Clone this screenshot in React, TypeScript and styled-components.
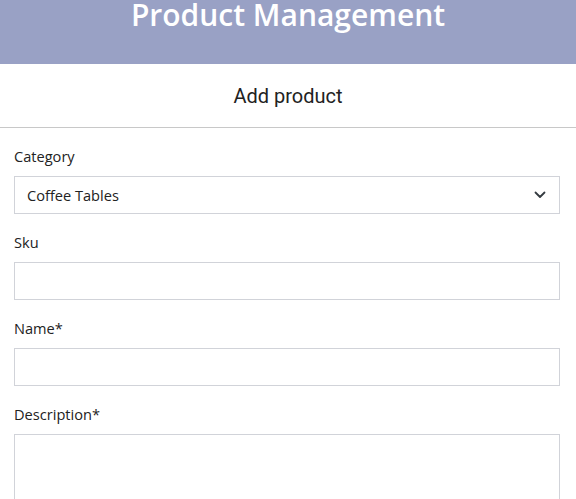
import React from 'react';
import styled, { createGlobalStyle } from 'styled-components';

const GlobalStyle = createGlobalStyle`
  html, body {
    margin: 0;
    padding: 0;
    background: #ffffff;
  }
  body {
    font-family: 'Open Sans', 'Noto Sans', sans-serif;
    overflow: hidden;
  }
`;

const Header = styled.header`
  height: 64px;
  background: #99a1c5;
  display: flex;
  justify-content: center;
  align-items: flex-start;
  overflow: hidden;
`;

const Title = styled.h1`
  margin: -5px 0 0;
  font-family: 'Open Sans', sans-serif;
  font-weight: 600;
  font-size: 30px;
  line-height: 40px;
  color: #ffffff;
`;

const SubBar = styled.div`
  height: 63px;
  display: flex;
  align-items: center;
  justify-content: center;
  border-bottom: 1px solid #c8c8c8;
`;

const SubTitle = styled.h2`
  margin: 0;
  font-family: Roboto, sans-serif;
  font-weight: 400;
  font-size: 20px;
  color: #222;
`;

const Form = styled.form`
  padding: 18px 16px 0 14px;
  display: flex;
  flex-direction: column;
`;

const Field = styled.div`
  display: flex;
  flex-direction: column;
  margin-bottom: 18px;
`;

const Label = styled.label`
  font-size: 14.6px;
  line-height: 20px;
  color: #222;
  margin-bottom: 10px;
`;

const boxBase = `
  box-sizing: border-box;
  width: 100%;
  border: 1px solid #d1d3d9;
  border-radius: 0;
  background: #fff;
  font-family: 'Open Sans', sans-serif;
  font-size: 14.6px;
  color: #222;
  outline: none;
`;

const SelectWrap = styled.div`
  position: relative;
`;

const Select = styled.select`
  ${boxBase}
  height: 38px;
  padding: 0 12px;
  appearance: none;
  -webkit-appearance: none;
`;

const Chevron = styled.svg`
  position: absolute;
  right: 14px;
  top: 15px;
  pointer-events: none;
`;

const Input = styled.input`
  ${boxBase}
  height: 38px;
  padding: 0 12px;
`;

const TextArea = styled.textarea`
  ${boxBase}
  height: 100px;
  padding: 8px 12px;
  resize: none;
`;

const App = () => {
  return (
    <>
      <GlobalStyle />
      <Header>
        <Title>Product Management</Title>
      </Header>
      <SubBar>
        <SubTitle>Add product</SubTitle>
      </SubBar>
      <Form onSubmit={(e) => e.preventDefault()}>
        <Field>
          <Label htmlFor="category">Category</Label>
          <SelectWrap>
            <Select id="category" defaultValue="coffee">
              <option value="coffee">Coffee Tables</option>
              <option value="sofas">Sofas</option>
              <option value="chairs">Chairs</option>
            </Select>
            <Chevron width="12" height="8" viewBox="0 0 12 8">
              <path d="M1.5 1.5 L6 6 L10.5 1.5" fill="none" stroke="#343a40" strokeWidth="1.8" strokeLinecap="round" strokeLinejoin="round" />
            </Chevron>
          </SelectWrap>
        </Field>
        <Field>
          <Label htmlFor="sku">Sku</Label>
          <Input id="sku" />
        </Field>
        <Field>
          <Label htmlFor="name">Name*</Label>
          <Input id="name" />
        </Field>
        <Field>
          <Label htmlFor="description">Description*</Label>
          <TextArea id="description" />
        </Field>
      </Form>
    </>
  );
};

export default App;
